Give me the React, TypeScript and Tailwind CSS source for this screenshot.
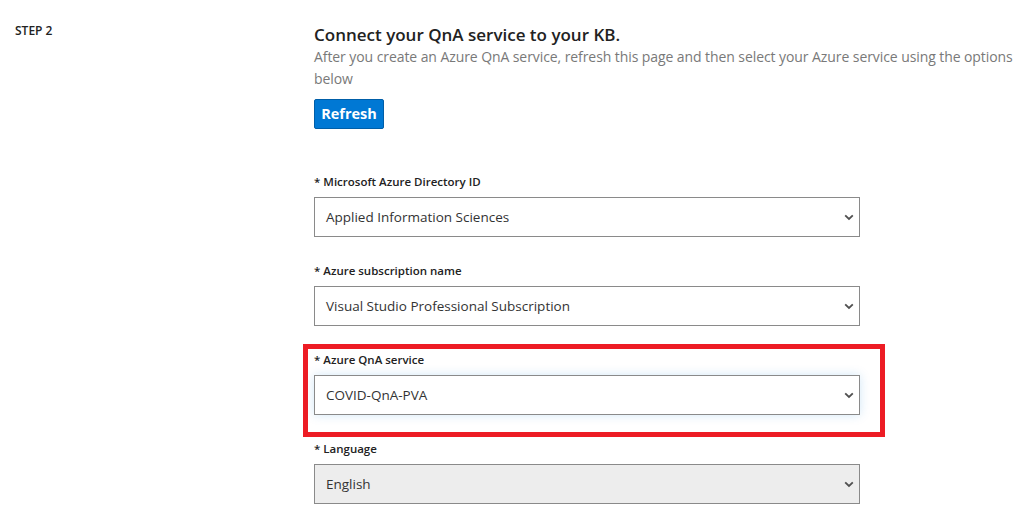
const font = { fontFamily: '"Open Sans", "Noto Sans", sans-serif' }

function Chevron() {
  return (
    <svg width="10" height="7" viewBox="0 0 10 7" className="shrink-0">
      <path d="M1.2 1.3 L5 5 L8.8 1.3" fill="none" stroke="#505050" strokeWidth="1.8" />
    </svg>
  )
}

function Dropdown({ value, disabled, focused }: { value: string; disabled?: boolean; focused?: boolean }) {
  return (
    <div
      className={
        'flex h-[40px] w-[546px] items-center justify-between border border-[#8a8a8a] pl-[11px] pr-[5px] text-[13.5px] text-[#333] ' +
        (disabled ? 'bg-[#ededed]' : 'bg-white') +
        (focused ? ' shadow-[0_0_10px_rgba(0,120,212,0.18)]' : '')
      }
    >
      <span>{value}</span>
      <Chevron />
    </div>
  )
}

function Label({ children }: { children: React.ReactNode }) {
  return <div className="h-[18px] text-[11.5px] font-semibold leading-[18px] text-[#222]">{children}</div>
}

export default function App() {
  return (
    <div className="flex min-h-[527px] bg-white" style={font}>
      <div className="w-[314px] shrink-0 pl-[15px] pt-[23px]">
        <div className="text-[12px] font-semibold leading-[16px] text-[#222]">STEP 2</div>
      </div>

      <div className="flex flex-col pt-[23px]">
        <h2 className="text-[17px] font-semibold leading-[24px] text-[#222]">Connect your QnA service to your KB.</h2>
        <p className="mt-[-1px] text-[14px] tracking-[-0.08px] leading-[22px] text-[#797979]">
          After you create an Azure QnA service, refresh this page and then select your Azure service using the options below
        </p>

        <button className="mt-[9px] h-[30px] w-[70px] rounded-[2px] border border-[#005ea8] bg-[#0078d4] text-[14.5px] font-bold text-white">
          Refresh
        </button>

        <div className="mt-[44px]">
          <Label>* Microsoft Azure Directory ID</Label>
          <div className="mt-[6px]">
            <Dropdown value="Applied Information Sciences" />
          </div>
        </div>

        <div className="mt-[25px]">
          <Label>* Azure subscription name</Label>
          <div className="mt-[6px]">
            <Dropdown value="Visual Studio Professional Subscription" />
          </div>
        </div>

        <div className="ml-[-11px] mt-[18px] w-[582px] border-[5px] border-[#ed1c24] pb-[17px] pl-[6px] pt-[2px]">
          <Label>* Azure QnA service</Label>
          <div className="mt-[6px]">
            <Dropdown value="COVID-QnA-PVA" focused />
          </div>
        </div>

        <div className="mt-[3px]">
          <Label>* Language</Label>
          <div className="mt-[6px]">
            <Dropdown value="English" disabled />
          </div>
        </div>
      </div>
    </div>
  )
}
